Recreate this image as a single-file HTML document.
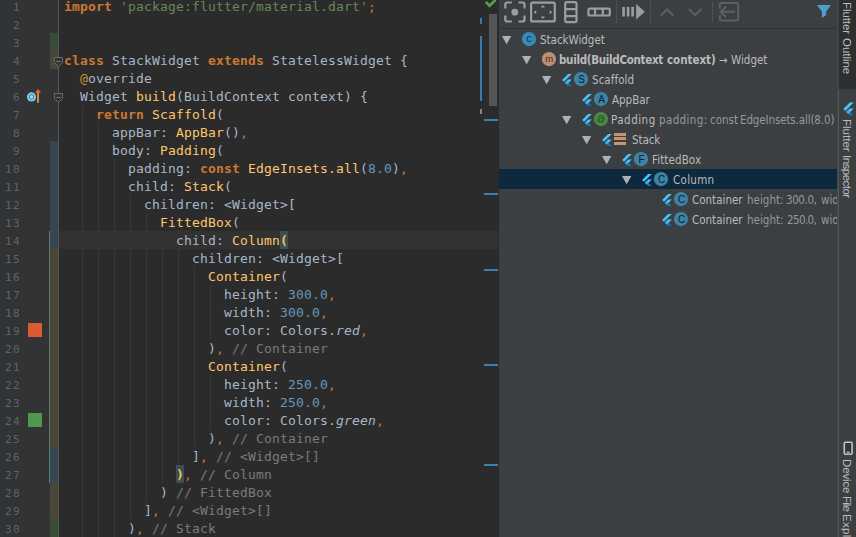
<!DOCTYPE html>
<html><head><meta charset="utf-8"><title>Flutter Outline</title>
<style>
html,body{margin:0;padding:0}
body{width:856px;height:537px;overflow:hidden;background:#2b2b2b;position:relative;font-family:"DejaVu Sans Mono","Liberation Mono",monospace}
#ed{position:absolute;left:0;top:0;width:499px;height:537px;background:#2b2b2b;overflow:hidden}
#gut{position:absolute;left:0;top:0;width:58px;height:537px;background:#313335;border-right:1px solid #555555}
.no{position:absolute;left:0;width:21px;text-align:right;height:18px;line-height:18px;font-size:11px;letter-spacing:1.38px;color:#606366}
.mk{position:absolute;left:50px;width:8px}
.cur{position:absolute;left:59px;top:231px;width:439px;height:18px;background:#323232}
.ln{position:absolute;left:64px;height:18px;line-height:18px;font-size:13px;letter-spacing:0.174px;color:#a9b7c6;white-space:pre}
.k{color:#cc7832;font-weight:bold}
.p{color:#cc7832}
.f{color:#ffc66d}
.s{color:#6a8759}
.n{color:#6897bb}
.c{color:#7b7b7b}
.i{font-style:italic}
.a{color:#c88d2e}
.b{color:#fac44d;font-weight:bold}
.bh{position:absolute;width:8px;height:18px;background:#3b4e57}
.fold{position:absolute;left:54px}
.ig{position:absolute;width:1px;background:#373737}
#pn{position:absolute;left:499px;top:0;width:338px;border-right:1px solid #434547;height:537px;background:#3c3f41;overflow:hidden;font-family:"DejaVu Sans Condensed","DejaVu Sans","Liberation Sans",sans-serif;font-stretch:condensed}
#tbi{position:absolute;left:0;top:0}
#tb{position:absolute;left:0;top:0;width:339px;height:28px;border-bottom:1px solid #323232}
.row{position:absolute;left:0;width:339px;height:20px;line-height:20px;font-size:11.5px;color:#bbbbbb;white-space:nowrap}
.row.sel{background:#0d293e}
.row span{position:absolute;top:0}
.ar{position:absolute;top:7px}
.flw{top:4.7px !important}
.fl{display:block}
.ic{top:2.9px !important}
.ci{display:block}
.lb{position:absolute;left:0;top:1px;height:20px;width:339px}
.bd{font-weight:bold}
.stk{position:static !important;display:block;width:12px;height:14px}
.stk i{display:block;height:3px;margin-top:1.4px;background:#c9956f}
.stk i:first-child{margin-top:1px}
.g{color:#969899}
.row b{color:#bbbbbb}
#rs{position:absolute;left:838px;top:0;width:18px;height:537px;background:#3c3f41;border-left:1px solid #555555;box-sizing:border-box;font-family:"Liberation Sans","DejaVu Sans",sans-serif}
.vt{position:absolute;left:16.6px;top:0;width:537px;height:18px;transform-origin:0 0;transform:rotate(90deg);white-space:nowrap;font-size:11.5px;line-height:18px;color:#bbbbbb}
.vt span{position:absolute;top:0}
</style></head><body>
<div id="ed">
<div class="cur"></div>
<div id="gut">
<div style="position:absolute;left:0;top:231px;width:58px;height:18px;background:#323232"></div>
<div class="mk" style="top:33px;height:18px;background:#384c38"></div>
<div class="mk" style="top:51px;height:18px;background:#4c4638"></div>
<div class="mk" style="top:141px;height:108px;background:#374752"></div>
<div class="mk" style="top:249px;height:198px;background:#4c4638"></div>
<div class="mk" style="top:447px;height:36px;background:#374752"></div>
<div class="mk" style="top:483px;height:36px;background:#4c4638"></div>
<div class="mk" style="top:519px;height:18px;background:#384c38"></div>
<div style="position:absolute;left:49px;top:231px;width:1px;height:252px;background:#5a7a76"></div>
<div style="position:absolute;left:28px;top:323px;width:14px;height:14px;background:#d95c34"></div>
<div style="position:absolute;left:28px;top:413px;width:14px;height:14px;background:#50984f"></div>
<svg style="position:absolute;left:25px;top:89px" width="18" height="16" viewBox="0 0 18 16"><circle cx="6.500" cy="7.900" r="4.600" fill="#79c8f2"/><circle cx="6.500" cy="7.900" r="2.200" fill="#a5d8f3" stroke="#5b6a75" stroke-width="0.900"/><rect x="12" y="3.100" width="2" height="10.700" fill="#c88c3c"/><path d="M10 3.900L13 0.100l3 3.800z" fill="#e8642c"/></svg>
<div class="no" style="top:-1px">1</div>
<div class="no" style="top:17px">2</div>
<div class="no" style="top:35px">3</div>
<div class="no" style="top:53px">4</div>
<div class="no" style="top:71px">5</div>
<div class="no" style="top:89px">6</div>
<div class="no" style="top:107px">7</div>
<div class="no" style="top:125px">8</div>
<div class="no" style="top:143px">9</div>
<div class="no" style="top:161px">10</div>
<div class="no" style="top:179px">11</div>
<div class="no" style="top:197px">12</div>
<div class="no" style="top:215px">13</div>
<div class="no" style="top:233px">14</div>
<div class="no" style="top:251px">15</div>
<div class="no" style="top:269px">16</div>
<div class="no" style="top:287px">17</div>
<div class="no" style="top:305px">18</div>
<div class="no" style="top:323px">19</div>
<div class="no" style="top:341px">20</div>
<div class="no" style="top:359px">21</div>
<div class="no" style="top:377px">22</div>
<div class="no" style="top:395px">23</div>
<div class="no" style="top:413px">24</div>
<div class="no" style="top:431px">25</div>
<div class="no" style="top:449px">26</div>
<div class="no" style="top:467px">27</div>
<div class="no" style="top:485px">28</div>
<div class="no" style="top:503px">29</div>
<div class="no" style="top:521px">30</div>
</div>
<div class="bh" style="left:280px;top:231px"></div><div class="bh" style="left:176px;top:465px"></div>
<div class="ig" style="left:82px;top:105px;height:18px"></div>
<div class="ig" style="left:82px;top:123px;height:18px"></div>
<div class="ig" style="left:98px;top:123px;height:18px"></div>
<div class="ig" style="left:82px;top:141px;height:18px"></div>
<div class="ig" style="left:98px;top:141px;height:18px"></div>
<div class="ig" style="left:82px;top:159px;height:18px"></div>
<div class="ig" style="left:98px;top:159px;height:18px"></div>
<div class="ig" style="left:114px;top:159px;height:18px"></div>
<div class="ig" style="left:82px;top:177px;height:18px"></div>
<div class="ig" style="left:98px;top:177px;height:18px"></div>
<div class="ig" style="left:114px;top:177px;height:18px"></div>
<div class="ig" style="left:82px;top:195px;height:18px"></div>
<div class="ig" style="left:98px;top:195px;height:18px"></div>
<div class="ig" style="left:114px;top:195px;height:18px"></div>
<div class="ig" style="left:130px;top:195px;height:18px"></div>
<div class="ig" style="left:82px;top:213px;height:18px"></div>
<div class="ig" style="left:98px;top:213px;height:18px"></div>
<div class="ig" style="left:114px;top:213px;height:18px"></div>
<div class="ig" style="left:130px;top:213px;height:18px"></div>
<div class="ig" style="left:146px;top:213px;height:18px"></div>
<div class="ig" style="left:82px;top:231px;height:18px"></div>
<div class="ig" style="left:98px;top:231px;height:18px"></div>
<div class="ig" style="left:114px;top:231px;height:18px"></div>
<div class="ig" style="left:130px;top:231px;height:18px"></div>
<div class="ig" style="left:146px;top:231px;height:18px"></div>
<div class="ig" style="left:162px;top:231px;height:18px"></div>
<div class="ig" style="left:82px;top:249px;height:18px"></div>
<div class="ig" style="left:98px;top:249px;height:18px"></div>
<div class="ig" style="left:114px;top:249px;height:18px"></div>
<div class="ig" style="left:130px;top:249px;height:18px"></div>
<div class="ig" style="left:146px;top:249px;height:18px"></div>
<div class="ig" style="left:162px;top:249px;height:18px"></div>
<div class="ig" style="left:178px;top:249px;height:18px"></div>
<div class="ig" style="left:82px;top:267px;height:18px"></div>
<div class="ig" style="left:98px;top:267px;height:18px"></div>
<div class="ig" style="left:114px;top:267px;height:18px"></div>
<div class="ig" style="left:130px;top:267px;height:18px"></div>
<div class="ig" style="left:146px;top:267px;height:18px"></div>
<div class="ig" style="left:162px;top:267px;height:18px"></div>
<div class="ig" style="left:178px;top:267px;height:18px"></div>
<div class="ig" style="left:194px;top:267px;height:18px"></div>
<div class="ig" style="left:82px;top:285px;height:18px"></div>
<div class="ig" style="left:98px;top:285px;height:18px"></div>
<div class="ig" style="left:114px;top:285px;height:18px"></div>
<div class="ig" style="left:130px;top:285px;height:18px"></div>
<div class="ig" style="left:146px;top:285px;height:18px"></div>
<div class="ig" style="left:162px;top:285px;height:18px"></div>
<div class="ig" style="left:178px;top:285px;height:18px"></div>
<div class="ig" style="left:194px;top:285px;height:18px"></div>
<div class="ig" style="left:210px;top:285px;height:18px"></div>
<div class="ig" style="left:82px;top:303px;height:18px"></div>
<div class="ig" style="left:98px;top:303px;height:18px"></div>
<div class="ig" style="left:114px;top:303px;height:18px"></div>
<div class="ig" style="left:130px;top:303px;height:18px"></div>
<div class="ig" style="left:146px;top:303px;height:18px"></div>
<div class="ig" style="left:162px;top:303px;height:18px"></div>
<div class="ig" style="left:178px;top:303px;height:18px"></div>
<div class="ig" style="left:194px;top:303px;height:18px"></div>
<div class="ig" style="left:210px;top:303px;height:18px"></div>
<div class="ig" style="left:82px;top:321px;height:18px"></div>
<div class="ig" style="left:98px;top:321px;height:18px"></div>
<div class="ig" style="left:114px;top:321px;height:18px"></div>
<div class="ig" style="left:130px;top:321px;height:18px"></div>
<div class="ig" style="left:146px;top:321px;height:18px"></div>
<div class="ig" style="left:162px;top:321px;height:18px"></div>
<div class="ig" style="left:178px;top:321px;height:18px"></div>
<div class="ig" style="left:194px;top:321px;height:18px"></div>
<div class="ig" style="left:210px;top:321px;height:18px"></div>
<div class="ig" style="left:82px;top:339px;height:18px"></div>
<div class="ig" style="left:98px;top:339px;height:18px"></div>
<div class="ig" style="left:114px;top:339px;height:18px"></div>
<div class="ig" style="left:130px;top:339px;height:18px"></div>
<div class="ig" style="left:146px;top:339px;height:18px"></div>
<div class="ig" style="left:162px;top:339px;height:18px"></div>
<div class="ig" style="left:178px;top:339px;height:18px"></div>
<div class="ig" style="left:194px;top:339px;height:18px"></div>
<div class="ig" style="left:82px;top:357px;height:18px"></div>
<div class="ig" style="left:98px;top:357px;height:18px"></div>
<div class="ig" style="left:114px;top:357px;height:18px"></div>
<div class="ig" style="left:130px;top:357px;height:18px"></div>
<div class="ig" style="left:146px;top:357px;height:18px"></div>
<div class="ig" style="left:162px;top:357px;height:18px"></div>
<div class="ig" style="left:178px;top:357px;height:18px"></div>
<div class="ig" style="left:194px;top:357px;height:18px"></div>
<div class="ig" style="left:82px;top:375px;height:18px"></div>
<div class="ig" style="left:98px;top:375px;height:18px"></div>
<div class="ig" style="left:114px;top:375px;height:18px"></div>
<div class="ig" style="left:130px;top:375px;height:18px"></div>
<div class="ig" style="left:146px;top:375px;height:18px"></div>
<div class="ig" style="left:162px;top:375px;height:18px"></div>
<div class="ig" style="left:178px;top:375px;height:18px"></div>
<div class="ig" style="left:194px;top:375px;height:18px"></div>
<div class="ig" style="left:210px;top:375px;height:18px"></div>
<div class="ig" style="left:82px;top:393px;height:18px"></div>
<div class="ig" style="left:98px;top:393px;height:18px"></div>
<div class="ig" style="left:114px;top:393px;height:18px"></div>
<div class="ig" style="left:130px;top:393px;height:18px"></div>
<div class="ig" style="left:146px;top:393px;height:18px"></div>
<div class="ig" style="left:162px;top:393px;height:18px"></div>
<div class="ig" style="left:178px;top:393px;height:18px"></div>
<div class="ig" style="left:194px;top:393px;height:18px"></div>
<div class="ig" style="left:210px;top:393px;height:18px"></div>
<div class="ig" style="left:82px;top:411px;height:18px"></div>
<div class="ig" style="left:98px;top:411px;height:18px"></div>
<div class="ig" style="left:114px;top:411px;height:18px"></div>
<div class="ig" style="left:130px;top:411px;height:18px"></div>
<div class="ig" style="left:146px;top:411px;height:18px"></div>
<div class="ig" style="left:162px;top:411px;height:18px"></div>
<div class="ig" style="left:178px;top:411px;height:18px"></div>
<div class="ig" style="left:194px;top:411px;height:18px"></div>
<div class="ig" style="left:210px;top:411px;height:18px"></div>
<div class="ig" style="left:82px;top:429px;height:18px"></div>
<div class="ig" style="left:98px;top:429px;height:18px"></div>
<div class="ig" style="left:114px;top:429px;height:18px"></div>
<div class="ig" style="left:130px;top:429px;height:18px"></div>
<div class="ig" style="left:146px;top:429px;height:18px"></div>
<div class="ig" style="left:162px;top:429px;height:18px"></div>
<div class="ig" style="left:178px;top:429px;height:18px"></div>
<div class="ig" style="left:194px;top:429px;height:18px"></div>
<div class="ig" style="left:82px;top:447px;height:18px"></div>
<div class="ig" style="left:98px;top:447px;height:18px"></div>
<div class="ig" style="left:114px;top:447px;height:18px"></div>
<div class="ig" style="left:130px;top:447px;height:18px"></div>
<div class="ig" style="left:146px;top:447px;height:18px"></div>
<div class="ig" style="left:162px;top:447px;height:18px"></div>
<div class="ig" style="left:178px;top:447px;height:18px"></div>
<div class="ig" style="left:82px;top:465px;height:18px"></div>
<div class="ig" style="left:98px;top:465px;height:18px"></div>
<div class="ig" style="left:114px;top:465px;height:18px"></div>
<div class="ig" style="left:130px;top:465px;height:18px"></div>
<div class="ig" style="left:146px;top:465px;height:18px"></div>
<div class="ig" style="left:162px;top:465px;height:18px"></div>
<div class="ig" style="left:82px;top:483px;height:18px"></div>
<div class="ig" style="left:98px;top:483px;height:18px"></div>
<div class="ig" style="left:114px;top:483px;height:18px"></div>
<div class="ig" style="left:130px;top:483px;height:18px"></div>
<div class="ig" style="left:146px;top:483px;height:18px"></div>
<div class="ig" style="left:82px;top:501px;height:18px"></div>
<div class="ig" style="left:98px;top:501px;height:18px"></div>
<div class="ig" style="left:114px;top:501px;height:18px"></div>
<div class="ig" style="left:130px;top:501px;height:18px"></div>
<div class="ig" style="left:82px;top:519px;height:18px"></div>
<div class="ig" style="left:98px;top:519px;height:18px"></div>
<div class="ig" style="left:114px;top:519px;height:18px"></div>
<div class="ln" style="top:-2px"><span class="k">import</span> <span class="s">&#x27;package:flutter/material.dart&#x27;</span><span class="p">;</span></div>
<div class="ln" style="top:16px"></div>
<div class="ln" style="top:34px"></div>
<div class="ln" style="top:52px"><span class="k">class</span> StackWidget <span class="k">extends</span> StatelessWidget {</div>
<div class="ln" style="top:70px">  <span class="a">@</span>override</div>
<div class="ln" style="top:88px">  Widget <span class="f">build</span>(BuildContext context) {</div>
<div class="ln" style="top:106px">    <span class="k">return</span> <span class="f">Scaffold</span>(</div>
<div class="ln" style="top:124px">      appBar: <span class="f">AppBar</span>()<span class="p">,</span></div>
<div class="ln" style="top:142px">      body: <span class="f">Padding</span>(</div>
<div class="ln" style="top:160px">        padding: <span class="k">const</span> <span class="f">EdgeInsets.all</span>(<span class="n">8.0</span>)<span class="p">,</span></div>
<div class="ln" style="top:178px">        child: <span class="f">Stack</span>(</div>
<div class="ln" style="top:196px">          children: &lt;Widget&gt;[</div>
<div class="ln" style="top:214px">            <span class="f">FittedBox</span>(</div>
<div class="ln" style="top:232px">              child: <span class="f">Column</span><span class="b">(</span></div>
<div class="ln" style="top:250px">                children: &lt;Widget&gt;[</div>
<div class="ln" style="top:268px">                  <span class="f">Container</span>(</div>
<div class="ln" style="top:286px">                    height: <span class="n">300.0</span><span class="p">,</span></div>
<div class="ln" style="top:304px">                    width: <span class="n">300.0</span><span class="p">,</span></div>
<div class="ln" style="top:322px">                    color: Colors.<span class="i">red</span><span class="p">,</span></div>
<div class="ln" style="top:340px">                  )<span class="p">,</span><span class="c"> // Container</span></div>
<div class="ln" style="top:358px">                  <span class="f">Container</span>(</div>
<div class="ln" style="top:376px">                    height: <span class="n">250.0</span><span class="p">,</span></div>
<div class="ln" style="top:394px">                    width: <span class="n">250.0</span><span class="p">,</span></div>
<div class="ln" style="top:412px">                    color: Colors.<span class="i">green</span><span class="p">,</span></div>
<div class="ln" style="top:430px">                  )<span class="p">,</span><span class="c"> // Container</span></div>
<div class="ln" style="top:448px">                ]<span class="p">,</span><span class="c"> // &lt;Widget&gt;[]</span></div>
<div class="ln" style="top:466px">              <span class="b">)</span><span class="p">,</span><span class="c"> // Column</span></div>
<div class="ln" style="top:484px">            )<span class="c"> // FittedBox</span></div>
<div class="ln" style="top:502px">          ]<span class="p">,</span><span class="c"> // &lt;Widget&gt;[]</span></div>
<div class="ln" style="top:520px">        )<span class="p">,</span><span class="c"> // Stack</span></div>
<svg class="fold" style="top:57px" width="9" height="11" viewBox="0 0 9 11"><path d="M0.500 0.500h8v5l-4 4-4-4z" fill="#2f3133" stroke="#696969"/><path d="M2.300 4.500h4.400" stroke="#7d7d7d"/></svg>
<svg class="fold" style="top:93px" width="9" height="11" viewBox="0 0 9 11"><path d="M0.500 0.500h8v5l-4 4-4-4z" fill="#2f3133" stroke="#696969"/><path d="M2.300 4.500h4.400" stroke="#7d7d7d"/></svg>
<svg style="position:absolute;left:474px;top:0" width="25" height="537" viewBox="474 0 25 537">
<path d="M485.900 1.900l3.700 3.900 6-6" fill="none" stroke="#4fa34a" stroke-width="2.700"/>
<rect x="489" y="14" width="8" height="92" fill="#555555"/>
<rect x="480" y="18" width="2" height="6" fill="#3b79a8"/>
<rect x="480" y="36" width="2" height="65" fill="#3b79a8"/>
<rect x="480" y="109" width="2" height="5" fill="#82878a"/>
<g fill="#3882b0"><rect x="484" y="119" width="14" height="2"/><rect x="484" y="193" width="14" height="2"/><rect x="484" y="269" width="14" height="2"/><rect x="484" y="364" width="14" height="2"/><rect x="484" y="464" width="14" height="2"/></g>
</svg>
</div>
<div id="pn">
<div id="tb"></div>
<svg id="tbi" width="339" height="28" viewBox="499 0 339 28" fill="none" stroke-linecap="butt">
<g stroke="#9b9ea1" stroke-width="2.200" stroke-linejoin="round">
<path d="M505.3 8.5V4.5a2 2 0 0 1 2-2h4.5M518.5 2.5h4a2 2 0 0 1 2 2v4M524.5 15.5v4a2 2 0 0 1-2 2h-4M511.8 21.5h-4.500a2 2 0 0 1-2-2v-4"/>
<rect x="531.1" y="2.7" width="23.7" height="18.7" rx="1.5"/>
<rect x="565.2" y="2.1" width="11.3" height="20" rx="1.5"/>
<path d="M565.2 9.1h11.3M565.2 16.1h11.3"/>
<rect x="588.4" y="8.7" width="21.4" height="6.8" rx="1.5"/>
<path d="M595 8.700v6.800M602.800 8.700v6.800"/>
</g>
<g fill="#9b9ea1" stroke="none">
<circle cx="514.800" cy="12.200" r="3.400"/>
<path d="M542.900 5.100l2.100 2.500h-4.200zM542.900 19.100l2.100-2.500h-4.200zM533.700 12.200l2.500-2.100v4.200zM552.200 12.200l-2.500-2.100v4.200z"/>
<rect x="622.300" y="6.900" width="2.600" height="9.600"/><rect x="626.800" y="6.900" width="2.600" height="9.600"/><rect x="631.300" y="6.900" width="2.600" height="9.600"/>
<path d="M636.200 4.100v15.500l8.600-7.750z"/>
</g>
<g stroke="#5d6062" stroke-width="2">
<path d="M661 15.500l6.100-6 6.100 6M688.900 9l6.200 6.100 6.200-6.100"/>
<path d="M719.800 8.500V4.500a1.500 1.500 0 0 1 1.500-1.500h15.400a1.500 1.500 0 0 1 1.500 1.500v14.600a1.500 1.500 0 0 1-1.500 1.500h-15.400a1.500 1.500 0 0 1-1.500-1.500v-4" stroke-linejoin="round"/>
<path d="M735 11.800h-14M726 6.500l-5.300 5.300 5.300 5.300"/>
</g>
<g stroke="#6a6d6f" stroke-width="1" stroke-dasharray="1 1.500">
<path d="M616.500 1.500v22.500M650.500 1.500v22.500M712.500 1.500v22.500"/>
</g>
<path d="M816.900 4.900h14.100l-4.800 6.600v3.600l-4.300 3v-6.600z" fill="#4c9ed0"/>
</svg>
<div class="row" style="top:29px"><svg class="ar" style="left:3px" width="10" height="9" viewBox="0 0 10 9"><path d="M0 0h9.3L4.65 8.2z" fill="#adb2b6"/></svg><span class="ic" style="left:23px"><svg class="ci" width="15" height="15" viewBox="0 0 15 15"><circle cx="7" cy="7.1" r="7.1" fill="#358bb8"/><text x="7" y="10" text-anchor="middle" font-family="Liberation Sans, sans-serif" font-size="11" font-weight="normal" fill="#15374d">c</text></svg></span><div class="lb"><span style="left:41px;letter-spacing:-0.025px">StackWidget</span></div></div>
<div class="row" style="top:49px"><svg class="ar" style="left:23px" width="10" height="9" viewBox="0 0 10 9"><path d="M0 0h9.3L4.65 8.2z" fill="#adb2b6"/></svg><span class="ic" style="left:43px"><svg class="ci" width="15" height="15" viewBox="0 0 15 15"><circle cx="7" cy="7.1" r="7.1" fill="#be8d75"/><text x="7.2" y="10" text-anchor="middle" font-family="Liberation Sans, sans-serif" font-size="9.5" font-weight="normal" fill="#46291a">m</text></svg></span><div class="lb"><span class="bd" style="left:60px;letter-spacing:-0.303px">build(BuildContext</span><span class="bd" style="left:168px;letter-spacing:-0.036px">context)</span><span style="left:220px;letter-spacing:0.0px">→</span><span style="left:232px;letter-spacing:-0.01px">Widget</span></div></div>
<div class="row" style="top:69px"><svg class="ar" style="left:43px" width="10" height="9" viewBox="0 0 10 9"><path d="M0 0h9.3L4.65 8.2z" fill="#adb2b6"/></svg><span class="flw" style="left:62.4px"><svg class="fl" width="12" height="13" viewBox="0 0 24 26"><path d="M14.314 0L2.3 12 6 15.7 21.684.013z" fill="#47c5fb"/><path d="M14.328 11.072L7.857 17.53l3.69 3.69L21.7 11.072z" fill="#47c5fb"/><path d="M11.547 21.22L14.328 24H21.7l-6.46-6.468z" fill="#1f6fb0"/><path d="M11.547 21.22l3.69-3.69-3.69-3.69-3.69 3.69z" fill="#36b0ee"/></svg></span><span class="ic" style="left:75px"><svg class="ci" width="15" height="15" viewBox="0 0 15 15"><circle cx="7" cy="7.1" r="7.1" fill="#3d83a8"/><text x="7.5" y="10.9" text-anchor="middle" font-family="Liberation Sans, sans-serif" font-size="10" font-weight="normal" fill="#12181d">S</text></svg></span><div class="lb"><span style="left:93px;letter-spacing:0.057px">Scaffold</span></div></div>
<div class="row" style="top:89px"><span class="flw" style="left:82.4px"><svg class="fl" width="12" height="13" viewBox="0 0 24 26"><path d="M14.314 0L2.3 12 6 15.7 21.684.013z" fill="#47c5fb"/><path d="M14.328 11.072L7.857 17.53l3.69 3.69L21.7 11.072z" fill="#47c5fb"/><path d="M11.547 21.22L14.328 24H21.7l-6.46-6.468z" fill="#1f6fb0"/><path d="M11.547 21.22l3.69-3.69-3.69-3.69-3.69 3.69z" fill="#36b0ee"/></svg></span><span class="ic" style="left:95px"><svg class="ci" width="15" height="15" viewBox="0 0 15 15"><circle cx="7" cy="7.1" r="7.1" fill="#3d83a8"/><text x="7.5" y="10.9" text-anchor="middle" font-family="Liberation Sans, sans-serif" font-size="10" font-weight="normal" fill="#12181d">A</text></svg></span><div class="lb"><span style="left:113px;letter-spacing:-0.02px">AppBar</span></div></div>
<div class="row" style="top:109px"><svg class="ar" style="left:63px" width="10" height="9" viewBox="0 0 10 9"><path d="M0 0h9.3L4.65 8.2z" fill="#adb2b6"/></svg><span class="flw" style="left:82.4px"><svg class="fl" width="12" height="13" viewBox="0 0 24 26"><path d="M14.314 0L2.3 12 6 15.7 21.684.013z" fill="#47c5fb"/><path d="M14.328 11.072L7.857 17.53l3.69 3.69L21.7 11.072z" fill="#47c5fb"/><path d="M11.547 21.22L14.328 24H21.7l-6.46-6.468z" fill="#1f6fb0"/><path d="M11.547 21.22l3.69-3.69-3.69-3.69-3.69 3.69z" fill="#36b0ee"/></svg></span><span class="ic" style="left:95px"><svg class="ci" width="15" height="15" viewBox="0 0 15 15"><circle cx="7" cy="7.1" r="7.1" fill="#4b8a43"/><text x="7" y="9.8" text-anchor="middle" font-family="Liberation Sans, sans-serif" font-size="8.5" font-weight="normal" fill="#1d3a19">@</text></svg></span><div class="lb"><span style="left:112px;letter-spacing:0.5px">Padding</span><span class="g" style="left:160px;letter-spacing:0.371px">padding:</span><span class="g" style="left:211px;letter-spacing:0.0px">const</span><span class="g" style="left:241px;letter-spacing:-0.128px">EdgeInsets.all(8.0)</span></div></div>
<div class="row" style="top:129px"><svg class="ar" style="left:83px" width="10" height="9" viewBox="0 0 10 9"><path d="M0 0h9.3L4.65 8.2z" fill="#adb2b6"/></svg><span class="flw" style="left:102.4px"><svg class="fl" width="12" height="13" viewBox="0 0 24 26"><path d="M14.314 0L2.3 12 6 15.7 21.684.013z" fill="#47c5fb"/><path d="M14.328 11.072L7.857 17.53l3.69 3.69L21.7 11.072z" fill="#47c5fb"/><path d="M11.547 21.22L14.328 24H21.7l-6.46-6.468z" fill="#1f6fb0"/><path d="M11.547 21.22l3.69-3.69-3.69-3.69-3.69 3.69z" fill="#36b0ee"/></svg></span><span class="ic" style="left:115px"><span class="stk"><i></i><i></i><i></i></span></span><div class="lb"><span style="left:133px;letter-spacing:-0.075px">Stack</span></div></div>
<div class="row" style="top:149px"><svg class="ar" style="left:103px" width="10" height="9" viewBox="0 0 10 9"><path d="M0 0h9.3L4.65 8.2z" fill="#adb2b6"/></svg><span class="flw" style="left:122.4px"><svg class="fl" width="12" height="13" viewBox="0 0 24 26"><path d="M14.314 0L2.3 12 6 15.7 21.684.013z" fill="#47c5fb"/><path d="M14.328 11.072L7.857 17.53l3.69 3.69L21.7 11.072z" fill="#47c5fb"/><path d="M11.547 21.22L14.328 24H21.7l-6.46-6.468z" fill="#1f6fb0"/><path d="M11.547 21.22l3.69-3.69-3.69-3.69-3.69 3.69z" fill="#36b0ee"/></svg></span><span class="ic" style="left:135px"><svg class="ci" width="15" height="15" viewBox="0 0 15 15"><circle cx="7" cy="7.1" r="7.1" fill="#3d83a8"/><text x="7.5" y="10.9" text-anchor="middle" font-family="Liberation Sans, sans-serif" font-size="10" font-weight="normal" fill="#12181d">F</text></svg></span><div class="lb"><span style="left:153px;letter-spacing:0.1px">FittedBox</span></div></div>
<div class="row sel" style="top:169px"><svg class="ar" style="left:123px" width="10" height="9" viewBox="0 0 10 9"><path d="M0 0h9.3L4.65 8.2z" fill="#adb2b6"/></svg><span class="flw" style="left:142.4px"><svg class="fl" width="12" height="13" viewBox="0 0 24 26"><path d="M14.314 0L2.3 12 6 15.7 21.684.013z" fill="#47c5fb"/><path d="M14.328 11.072L7.857 17.53l3.69 3.69L21.7 11.072z" fill="#47c5fb"/><path d="M11.547 21.22L14.328 24H21.7l-6.46-6.468z" fill="#1f6fb0"/><path d="M11.547 21.22l3.69-3.69-3.69-3.69-3.69 3.69z" fill="#36b0ee"/></svg></span><span class="ic" style="left:155px"><svg class="ci" width="15" height="15" viewBox="0 0 15 15"><circle cx="7" cy="7.1" r="7.1" fill="#3d83a8"/><text x="7.5" y="10.9" text-anchor="middle" font-family="Liberation Sans, sans-serif" font-size="10" font-weight="normal" fill="#12181d">C</text></svg></span><div class="lb"><span style="left:174px;letter-spacing:0.3px">Column</span></div></div>
<div class="row" style="top:189px"><span class="flw" style="left:162.4px"><svg class="fl" width="12" height="13" viewBox="0 0 24 26"><path d="M14.314 0L2.3 12 6 15.7 21.684.013z" fill="#47c5fb"/><path d="M14.328 11.072L7.857 17.53l3.69 3.69L21.7 11.072z" fill="#47c5fb"/><path d="M11.547 21.22L14.328 24H21.7l-6.46-6.468z" fill="#1f6fb0"/><path d="M11.547 21.22l3.69-3.69-3.69-3.69-3.69 3.69z" fill="#36b0ee"/></svg></span><span class="ic" style="left:175px"><svg class="ci" width="15" height="15" viewBox="0 0 15 15"><circle cx="7" cy="7.1" r="7.1" fill="#3d83a8"/><text x="7.5" y="10.9" text-anchor="middle" font-family="Liberation Sans, sans-serif" font-size="10" font-weight="normal" fill="#12181d">C</text></svg></span><div class="lb"><span style="left:193px;letter-spacing:0.0px">Container</span><span class="g" style="left:248px;letter-spacing:0.017px">height:</span><span class="g" style="left:287px;letter-spacing:-0.41px">300.0,</span><span class="g" style="left:322px;letter-spacing:0px">width: 300.0, color: Colors.red</span></div></div>
<div class="row" style="top:209px"><span class="flw" style="left:162.4px"><svg class="fl" width="12" height="13" viewBox="0 0 24 26"><path d="M14.314 0L2.3 12 6 15.7 21.684.013z" fill="#47c5fb"/><path d="M14.328 11.072L7.857 17.53l3.69 3.69L21.7 11.072z" fill="#47c5fb"/><path d="M11.547 21.22L14.328 24H21.7l-6.46-6.468z" fill="#1f6fb0"/><path d="M11.547 21.22l3.69-3.69-3.69-3.69-3.69 3.69z" fill="#36b0ee"/></svg></span><span class="ic" style="left:175px"><svg class="ci" width="15" height="15" viewBox="0 0 15 15"><circle cx="7" cy="7.1" r="7.1" fill="#3d83a8"/><text x="7.5" y="10.9" text-anchor="middle" font-family="Liberation Sans, sans-serif" font-size="10" font-weight="normal" fill="#12181d">C</text></svg></span><div class="lb"><span style="left:193px;letter-spacing:0.0px">Container</span><span class="g" style="left:248px;letter-spacing:0.017px">height:</span><span class="g" style="left:288px;letter-spacing:-0.61px">250.0,</span><span class="g" style="left:322px;letter-spacing:0px">width: 250.0, color: Colors.green</span></div></div>
</div>
<div id="rs">
<div style="position:absolute;left:-1px;top:0;width:19px;height:89px;background:#2d2f30;border-left:1px solid #3f4142;box-sizing:border-box"></div>
<div class="vt"><span style="left:2px;letter-spacing:-0.083px">Flutter</span><span style="left:38px;letter-spacing:-0.033px">Outline</span><span style="left:119px;letter-spacing:0.017px">Flutter</span><span style="left:155px;letter-spacing:-0.525px">Inspector</span><span style="left:459px;letter-spacing:-0.13px">Device</span><span style="left:496px;letter-spacing:-0.867px">File</span><span style="left:514px;letter-spacing:0.3px">Explorer</span></div>
<svg style="position:absolute;left:3px;top:101.500px" width="13" height="15" viewBox="0 0 24 26"><path d="M14.314 0L2.3 12 6 15.7 21.684.013z" fill="#47c5fb"/><path d="M14.328 11.072L7.857 17.53l3.69 3.69L21.7 11.072z" fill="#47c5fb"/><path d="M11.547 21.22L14.328 24H21.7l-6.46-6.468z" fill="#1f6fb0"/><path d="M11.547 21.22l3.69-3.69-3.69-3.69-3.69 3.69z" fill="#36b0ee"/></svg>
<svg style="position:absolute;left:4px;top:441px" width="11" height="15" viewBox="0 0 11 15"><rect x="1.3" y="1.300" width="7.800" height="12" rx="1" fill="#35383a" stroke="#c4c4c4" stroke-width="1.600"/><path d="M3.700 11.300h3" stroke="#c4c4c4" stroke-width="1.200"/></svg>
</div>
</body></html>
